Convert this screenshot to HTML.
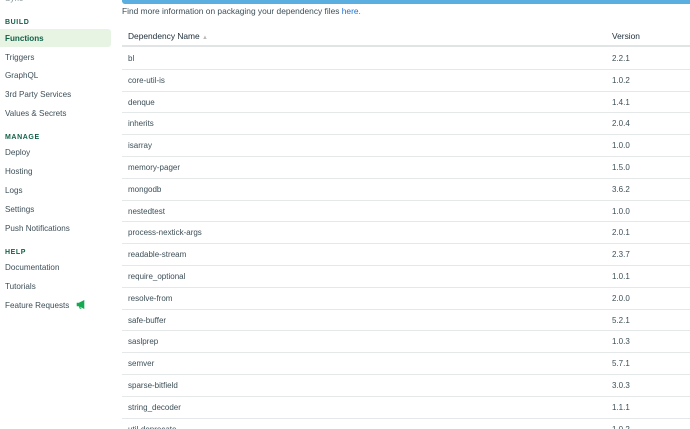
<!DOCTYPE html>
<html><head><style>
*{margin:0;padding:0;box-sizing:border-box}
html,body{width:690px;height:429px;overflow:hidden}
body{background:#fff;font-family:"Liberation Sans",sans-serif;color:#3d4f58;position:relative}
.s{position:absolute;left:5px;font-size:8.1px;line-height:12px}
.h{font-size:7px;font-weight:bold;letter-spacing:.6px;color:#116149}
.act{position:absolute;left:0;top:29px;width:111px;height:18px;background:#e7f4e4;border-radius:0 3px 3px 0}
.bar{position:absolute;left:122px;top:0;width:568px;height:4px;background:#5aaee0;border-radius:0 0 0 3px}
.info{position:absolute;left:122px;top:6px;font-size:8.4px;color:#3d4f58}
.info a{color:#1a6fd1;text-decoration:none}
.row{position:absolute;left:122px;width:568px;height:21.8px;border-bottom:1px solid #e4e8e8;font-size:8px;color:#3d4f58}
.row span{position:absolute;top:6px}
.n{left:6px}.v{left:490px}
.hd{position:absolute;left:122px;top:26px;width:568px;height:21px;border-bottom:2px solid #e0e4e4;font-size:8.4px;color:#21313c}
.hd span{position:absolute;top:5px}
</style></head><body>
<div class="s" style="top:-7px;color:#89979b">Sync <span style="color:#ccc">&nbsp;———</span></div>
<div class="s h" style="top:17px">BUILD</div>
<div class="act"></div>
<div class="s" style="top:33px;font-weight:bold;color:#116149">Functions</div>
<div class="s" style="top:52px">Triggers</div>
<div class="s" style="top:70px">GraphQL</div>
<div class="s" style="top:89px">3rd Party Services</div>
<div class="s" style="top:108px">Values &amp; Secrets</div>
<div class="s h" style="top:132px">MANAGE</div>
<div class="s" style="top:147px">Deploy</div>
<div class="s" style="top:166px">Hosting</div>
<div class="s" style="top:185px">Logs</div>
<div class="s" style="top:204px">Settings</div>
<div class="s" style="top:223px">Push Notifications</div>
<div class="s h" style="top:247px">HELP</div>
<div class="s" style="top:262px">Documentation</div>
<div class="s" style="top:281px">Tutorials</div>
<div class="s" style="top:300px">Feature Requests <svg width="10" height="9" viewBox="0 0 10 9" style="margin-left:4px;vertical-align:-1px"><path d="M1 3h2l5-2.5v8L3 6H1z M3 6l1 2.5h1.5" fill="#13aa52" stroke="#13aa52" stroke-width=".6"/></svg></div>
<div class="bar"></div>
<div class="info">Find more information on packaging your dependency files <a>here.</a></div>
<div class="hd"><span class="n">Dependency Name <span style="color:#bbb;font-size:6px;position:static">▲</span></span><span class="v">Version</span></div>
<div id="rows"></div>
<script>
var d=[["bl","2.2.1"],["core-util-is","1.0.2"],["denque","1.4.1"],["inherits","2.0.4"],["isarray","1.0.0"],["memory-pager","1.5.0"],["mongodb","3.6.2"],["nestedtest","1.0.0"],["process-nextick-args","2.0.1"],["readable-stream","2.3.7"],["require_optional","1.0.1"],["resolve-from","2.0.0"],["safe-buffer","5.2.1"],["saslprep","1.0.3"],["semver","5.7.1"],["sparse-bitfield","3.0.3"],["string_decoder","1.1.1"],["util-deprecate","1.0.2"]];
var h="";d.forEach(function(r,i){h+='<div class="row" style="top:'+(48+21.8*i).toFixed(1)+'px"><span class="n">'+r[0]+'</span><span class="v">'+r[1]+'</span></div>'});
document.getElementById("rows").innerHTML=h;
</script>
</body></html>
